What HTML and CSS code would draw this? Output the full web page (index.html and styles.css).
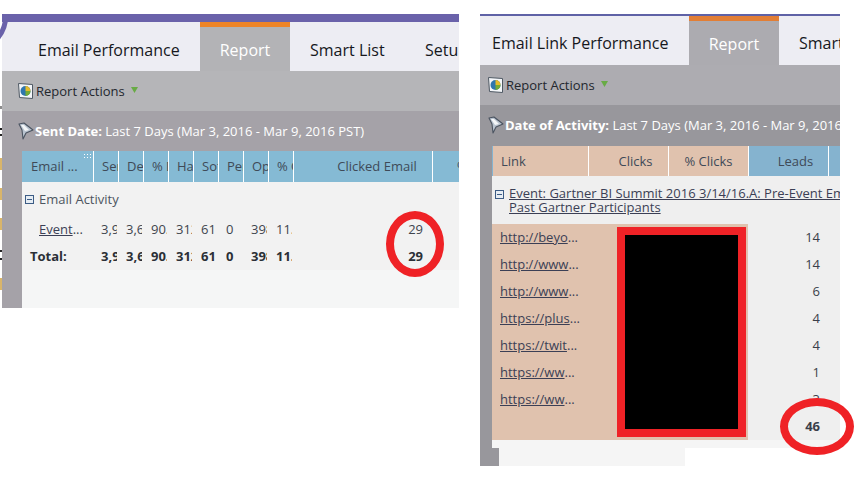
FILE: index.html
```html
<!DOCTYPE html>
<html lang="en">
<head>
<meta charset="utf-8">
<title>Report comparison</title>
<link rel="stylesheet" href="styles.css">
</head>
<body>
<div class="stage">
  <section class="panel panel-left">
    <svg class="corner" width="8" height="30" viewBox="0 0 8 30"><path d="M6 0C6 10 3 18 -3 25" fill="none" stroke="#6a62aa" stroke-width="5"/></svg>
    <div class="bar bar-left"></div>
    <nav class="tabs">
      <div class="tab tab-a1">Email Performance</div>
      <div class="tab tab-on">Report</div>
      <div class="tab tab-a2">Smart List</div>
      <div class="tab tab-a3">Setup</div>
    </nav>
    <div class="tool">
      <svg class="ico-rep" width="15" height="16" viewBox="0 0 15 16"><path d="M.5 .5l14 1v14L1.500 14.500z" fill="#f4f6f9" stroke="#4f5964"/><circle cx="7.500" cy="8" r="5" fill="#2f76ad"/><path d="M7.500 3A5 5 0 0 1 12.500 8H7.500z" fill="#e6bb28"/><path d="M7.500 8h5A5 5 0 0 1 7.500 13z" fill="#74ab35"/></svg>
      <span>Report Actions</span>
      <svg class="ico-down" width="7" height="6" viewBox="0 0 7 6"><path d="M0 0h7L3.500 6z" fill="#68ab45"/></svg>
    </div>
    <div class="filter">
      <svg class="ico-fun" width="16" height="20" viewBox="0 0 16 20"><path d="M1 3l5-1 9 7-7 3-3 6-1-9z" fill="#b9c3cf" stroke="#4a5360" stroke-width="1.100" stroke-linejoin="round"/><path d="M3 4l3 0 5 5-4 1z" fill="#f4f6f8"/></svg>
      <span><b>Sent Date:</b> Last 7 Days (Mar 3, 2016 - Mar 9, 2016 PST)</span>
    </div>
    <div class="body-left">
      <div class="table-left">
        <div class="head">
          <div class="hc c-email">Email ...<span class="grip"></span></div>
          <div class="hc c-n">Sent</div><div class="hc c-n">Delivered</div><div class="hc c-n">% Delivered</div>
          <div class="hc c-n">Hard Bounced</div><div class="hc c-n">Soft Bounced</div><div class="hc c-n">Pending</div>
          <div class="hc c-n">Opened</div><div class="hc c-n">% Opened</div>
          <div class="hc c-clk">Clicked Email</div><div class="hc c-end">% Clicked</div>
        </div>
        <div class="rows">
          <div class="group"><span class="minus"></span>Email Activity</div>
          <div class="row">
            <div class="rc c-email indent"><a class="lnk">Event</a>...</div>
            <div class="rc c-n">3,929</div><div class="rc c-n">3,621</div><div class="rc c-n">90.5</div>
            <div class="rc c-n">312</div><div class="rc c-n">61</div><div class="rc c-n">0</div>
            <div class="rc c-n">398</div><div class="rc c-n">11.0</div>
            <div class="rc c-clk num">29</div>
          </div>
          <div class="row total">
            <div class="rc c-email">Total:</div>
            <div class="rc c-n">3,929</div><div class="rc c-n">3,621</div><div class="rc c-n">90.5</div>
            <div class="rc c-n">312</div><div class="rc c-n">61</div><div class="rc c-n">0</div>
            <div class="rc c-n">398</div><div class="rc c-n">11.0</div>
            <div class="rc c-clk num">29</div>
          </div>
        </div>
        <div class="rest-left"></div>
      </div>
    </div>
  </section>

  <section class="panel panel-right">
    <div class="bar bar-right"></div>
    <nav class="tabs">
      <div class="tab tab-b1">Email Link Performance</div>
      <div class="tab tab-on">Report</div>
      <div class="tab tab-b2">Smart List</div>
    </nav>
    <div class="tool tool-r">
      <svg class="ico-rep" width="15" height="16" viewBox="0 0 15 16"><path d="M.5 .5l14 1v14L1.500 14.500z" fill="#f4f6f9" stroke="#4f5964"/><circle cx="7.500" cy="8" r="5" fill="#2f76ad"/><path d="M7.500 3A5 5 0 0 1 12.500 8H7.500z" fill="#e6bb28"/><path d="M7.500 8h5A5 5 0 0 1 7.500 13z" fill="#74ab35"/></svg>
      <span>Report Actions</span>
      <svg class="ico-down" width="7" height="6" viewBox="0 0 7 6"><path d="M0 0h7L3.500 6z" fill="#68ab45"/></svg>
    </div>
    <div class="filter filter-r">
      <svg class="ico-fun" width="16" height="20" viewBox="0 0 16 20"><path d="M1 3l5-1 9 7-7 3-3 6-1-9z" fill="#b9c3cf" stroke="#4a5360" stroke-width="1.100" stroke-linejoin="round"/><path d="M3 4l3 0 5 5-4 1z" fill="#f4f6f8"/></svg>
      <span class="clip"><b>Date of Activity:</b> Last 7 Days (Mar 3, 2016 - Mar 9, 2016 PST)</span>
    </div>
    <div class="body-right">
      <div class="body-top">
        <div class="head head-r">
          <div class="hc peach c-link">Link</div>
          <div class="hc peach c-m shift">Clicks</div>
          <div class="hc peach c-m">% Clicks</div>
          <div class="hc c-m shift">Leads</div>
          <div class="hc c-fill"></div>
        </div>
        <div class="event">
          <span class="minus"></span>
          <div class="event-text"><a class="lnk">Event: Gartner BI Summit 2016 3/14/16.A: Pre-Event Email</a><br><a class="lnk">Past Gartner Participants</a></div>
        </div>
        <div class="data">
          <div class="links">
            <div class="lrow"><a class="lnk">http://beyo</a>...</div>
            <div class="lrow"><a class="lnk">http://www</a>...</div>
            <div class="lrow"><a class="lnk">http://www</a>...</div>
            <div class="lrow"><a class="lnk">https://plus</a>...</div>
            <div class="lrow"><a class="lnk">https://twit</a>...</div>
            <div class="lrow"><a class="lnk">https://ww</a>...</div>
            <div class="lrow"><a class="lnk">https://ww</a>...</div>
          </div>
          <div class="redact"></div>
          <div class="leads">
            <div class="lrow">14</div><div class="lrow">14</div><div class="lrow">6</div>
            <div class="lrow">4</div><div class="lrow">4</div><div class="lrow">1</div>
            <div class="lrow">3</div>
            <div class="lead-total">46</div>
          </div>
        </div>
        <div class="foot1"></div>
      </div>
      <div class="foot-row">
        <div class="foot-grey"></div>
        <div class="foot2"></div>
      </div>
    </div>
  </section>

  <div class="edge"></div>
  <div class="ring ring-a"></div>
  <div class="ring ring-b"></div>
</div>
</body>
</html>
```

FILE: styles.css
```css
*, *::before, *::after { box-sizing: border-box; }
html, body { margin: 0; padding: 0; background: #fff; }
body { font-family: "Open Sans", "Noto Sans", sans-serif; color: #3a3f4a; }
.stage { position: relative; width: 867px; height: 489px; overflow: hidden; display: flex; align-items: flex-start; padding: 14px 0 0 2px; }
.panel { position: relative; flex: none; display: flex; flex-direction: column; }
.panel-left { width: 457px; height: 294px; }
.panel-right { width: 360px; height: 452px; margin-left: 21px; }
.corner { position: absolute; left: -2px; top: 0; overflow: visible; z-index: 1; }
.bar { flex: none; background: #6a62aa; }
.bar-left { height: 8px; }
.bar-right { height: 2px; background: #5f62a6; }
.edge { position: absolute; left: 0; top: 0; width: 2px; height: 310px; background: linear-gradient(to bottom, transparent 106px, #8d8d8d 106px, #8d8d8d 109px, transparent 109px, transparent 128px, #222 128px, #222 130px, transparent 130px, transparent 134px, #222 134px, #222 136px, transparent 136px, transparent 158px, #d9b56a 158px, #d9b56a 170px, transparent 170px, transparent 188px, #d9b56a 188px, #d9b56a 200px, transparent 200px, transparent 218px, #d9b56a 218px, #d9b56a 230px, transparent 230px, transparent 250px, #222 250px, #222 252px, transparent 252px, transparent 258px, #222 258px, #222 260px, transparent 260px, transparent 278px, #d9b56a 278px, #d9b56a 290px, transparent 290px); }

.tabs { display: flex; height: 49px; flex: none; overflow: hidden; background: #ededf3; }
.tab { flex: none; height: 49px; font-size: 16px; line-height: 56px; color: #16181d; white-space: nowrap; overflow: hidden; }
.tab-on { width: 90px; background: #b3b3b6; border-top: 5px solid #ee8427; color: #fff; text-align: center; line-height: 47px; }
.tab-a1 { width: 198px; padding-left: 36px; }
.tab-a2 { width: 130px; padding-left: 20px; }
.tab-a3 { width: 39px; padding-left: 5px; }
.tab-b1 { width: 209px; padding-left: 12px; line-height: 55px; }
.tab-b2 { width: 61px; padding-left: 20px; line-height: 55px; }
.panel-right .tab-on { background: #acabb0; border-top-color: #e27e35; }

.tool { flex: none; height: 40px; background: #b5b5b8; display: flex; align-items: center; padding-left: 16px; font-size: 13px; color: #23272e; }
.tool-r { background: #adacb1; padding-left: 8px; }
.ico-rep { margin-right: 3px; flex: none; }
.ico-down { margin-left: 6px; margin-top: -2px; flex: none; }

.filter { flex: none; height: 40px; background: #a5a2a8; display: flex; align-items: center; padding-left: 16px; font-size: 13px; color: #fff; white-space: nowrap; overflow: hidden; }
.filter-r { background: #98979c; padding-left: 8px; }
.filter b { font-weight: 700; }
.ico-fun { margin-right: 1px; flex: none; }
.clip { overflow: hidden; }

.body-left { flex: 1; background: #a5a2a8; padding-left: 20px; min-height: 0; }
.table-left { height: 100%; display: flex; flex-direction: column; background: #f5f6f6; }
.head { display: flex; flex: none; height: 31px; background: #85bad4; }
.hc { flex: none; height: 100%; border-right: 1px solid #fff; font-size: 13px; line-height: 31px; color: #3f4a58; overflow: hidden; white-space: nowrap; text-align: center; position: relative; }
.c-email { width: 72px; }
.head .c-email { padding-left: 9px; text-align: left; }
.head .c-n { width: 25px; padding-left: 8px; text-align: left; }
.c-clk { width: 139px; }
.head .c-clk { padding-left: 28px; }
.c-end { flex: 1; border-right: 0; padding-left: 24px; text-align: left; }
.grip { position: absolute; right: 2px; top: 2px; width: 8px; height: 7px; background: radial-gradient(#fff 40%, transparent 45%) 0 0 / 3px 3px; }

.rows { flex: none; height: 88px; background: #f2f2f2; }
.group { height: 34px; display: flex; align-items: center; padding: 0 0 0 3px; font-size: 13px; color: #4d5560; }
.minus { flex: none; display: inline-block; width: 9px; height: 9px; border: 1px solid #3c5c85; background: linear-gradient(#3c5c85, #3c5c85) center / 5px 1px no-repeat #e6edf4; margin-right: 5px; }
.row { display: flex; height: 27px; font-size: 13px; line-height: 27px; color: #40454e; }
.rc { flex: none; overflow: hidden; white-space: nowrap; }
.row .c-n { width: 16px; margin: 0 2px 0 7px; }
.row .c-email { padding-left: 8px; }
.row .indent { padding-left: 17px; }
.row .num { text-align: right; padding-right: 10px; width: 139px; }
.total { font-weight: 700; color: #2b2f36; }
.lnk { color: #3b3f55; text-decoration: underline; }
.rest-left { flex: 1; }

.body-right { flex: 1; display: flex; flex-direction: column; }
.body-top { flex: none; background: #98979c; padding: 1px 0 0 12px; }
.head-r { height: 30px; background: #85b3cf; }
.head-r .hc { line-height: 30px; }
.peach { background: #e0c2ae; }
.c-link { width: 97px; padding-left: 8px; text-align: left; border-left: 1px solid #85b3cf; }
.c-m { width: 80px; }
.shift { padding-left: 14px; }
.c-fill { flex: 1; border-right: 0; }
.event { height: 48px; background: #efefef; display: flex; padding: 10px 0 0 3px; overflow: hidden; }
.event .minus { margin-top: 4px; }
.event-text { font-size: 13px; line-height: 14px; white-space: nowrap; }
.data { height: 216px; display: flex; background: #efefef; }
.links { flex: none; width: 125px; background: #e0c2ae; padding: 0 0 0 8px; font-size: 13px; color: #3b3f55; }
.lrow { height: 27px; line-height: 27px; }
.redact { flex: none; width: 131px; background: #e0c2ae; position: relative; }
.redact::before { content: ""; position: absolute; left: 0; top: 3px; right: 2px; height: 210px; background: #000; border: 8px solid #ef2226; }
.leads { flex: 1; font-size: 13px; color: #3a3f4a; padding-right: 20px; text-align: right; position: relative; }
.lead-total { position: absolute; right: 20px; top: 193px; font-weight: 700; }
.foot1 { height: 8px; margin-left: 0; background: #f5f5f5; }
.foot-row { flex: none; height: 18px; display: flex; }
.foot-grey { flex: none; width: 19px; background: #98979c; }
.foot2 { flex: none; width: 186px; background: #f5f5f5; }

.ring { position: absolute; border-style: solid; border-color: #ef2226; border-radius: 50%; }
.ring-a { left: 386px; top: 211px; width: 58px; height: 66px; border-width: 8px; }
.ring-b { left: 780px; top: 398px; width: 74px; height: 57px; border-width: 8px; }
```
